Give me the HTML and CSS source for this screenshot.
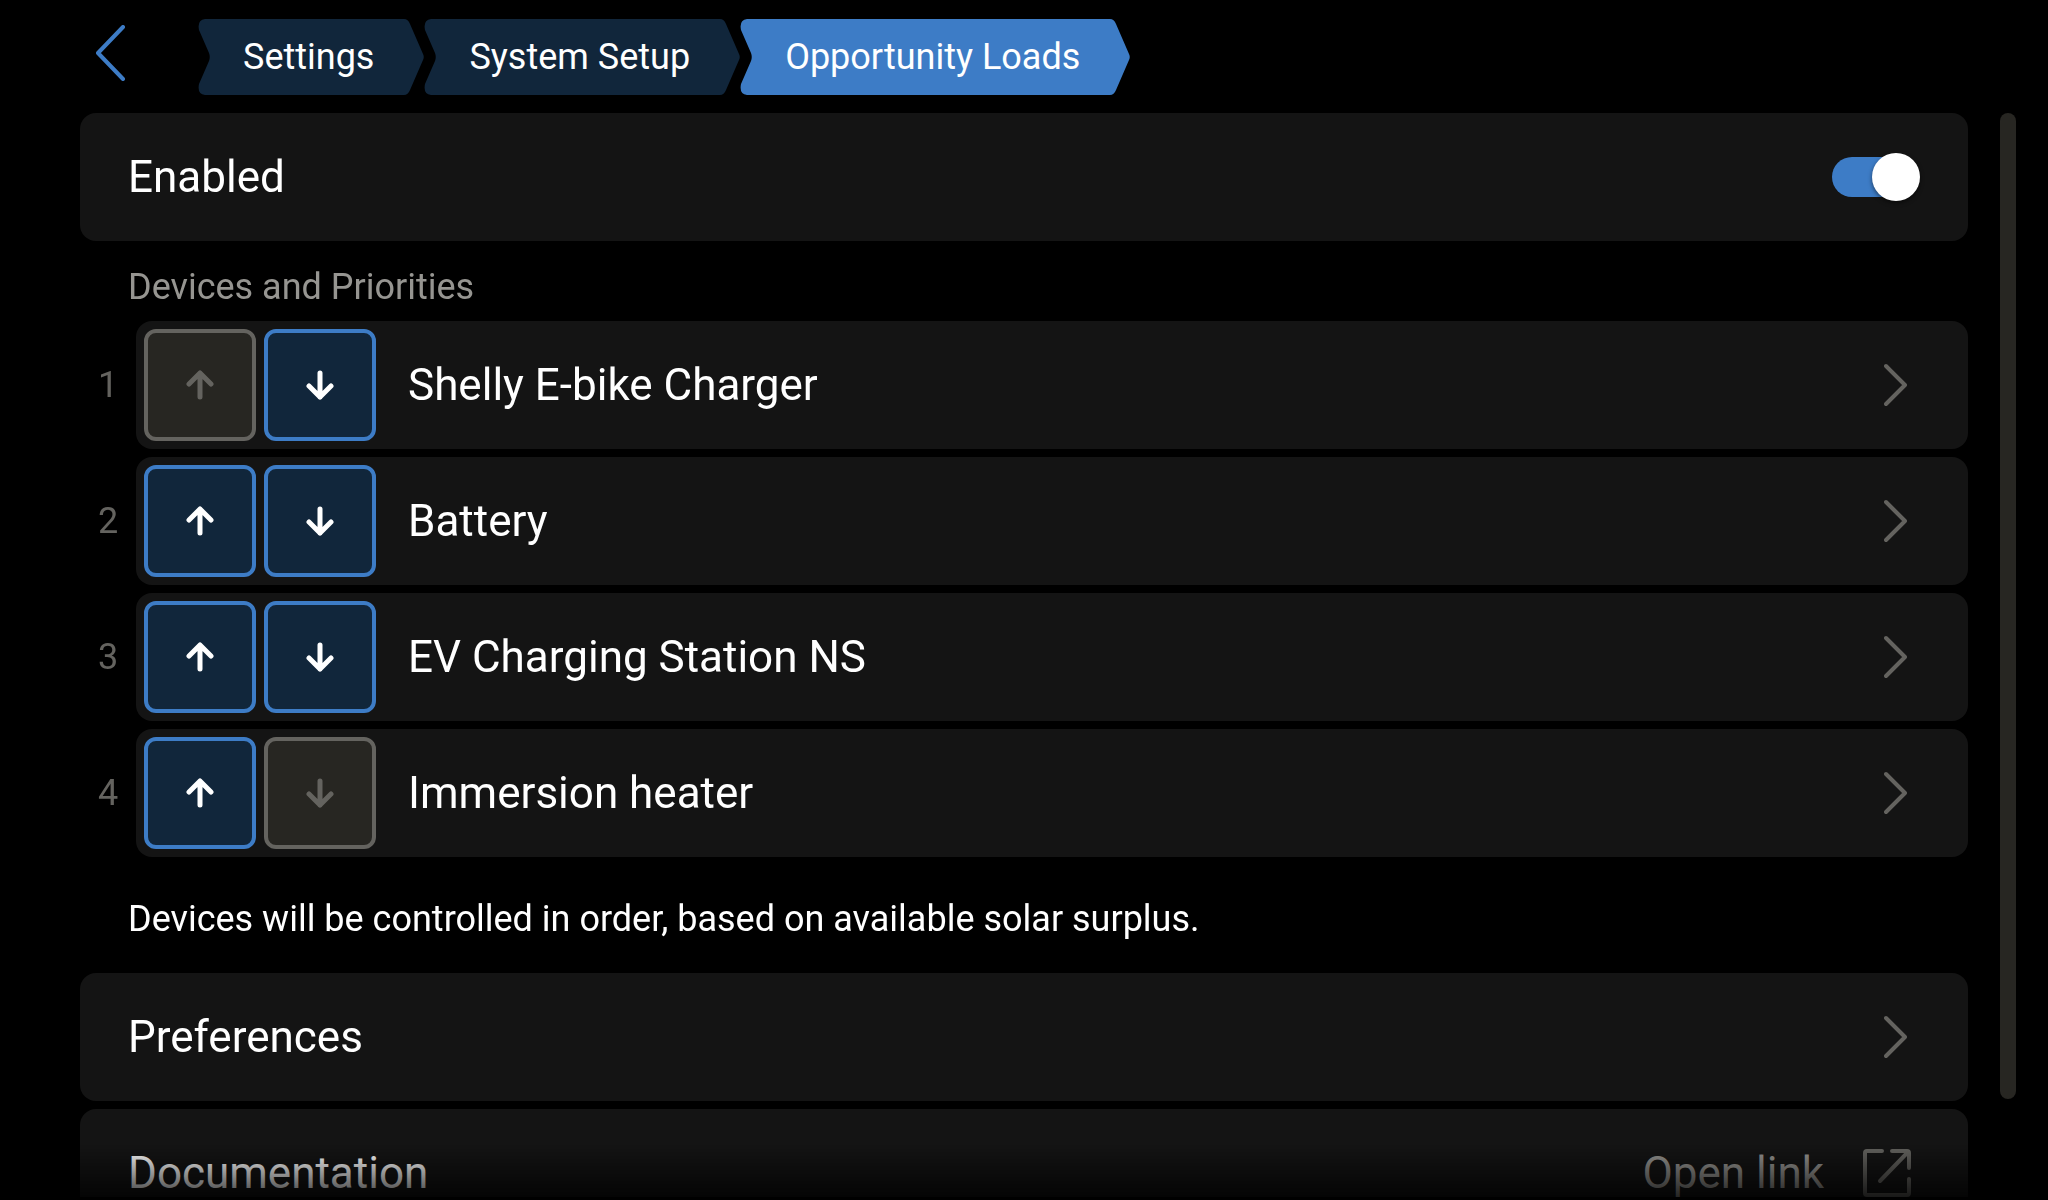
FILE: index.html
```html
<!DOCTYPE html>
<html lang="en">
<head>
<meta charset="utf-8">
<meta name="viewport" content="width=device-width, initial-scale=1">
<title>Opportunity Loads</title>
<link rel="stylesheet" href="styles.css">
</head>
<body>
<svg class="defs" aria-hidden="true">
  <symbol id="cap-left" viewBox="0 0 16 76"><path d="M16 0H7Q-1 1 1 11L11 34Q12.500 38 11 42L1 65Q-1 75 7 76H16Z"/></symbol>
  <symbol id="cap-right" viewBox="0 0 24 76"><path d="M0 0H4Q8 0 10 5L23 35Q24.500 38 23 41L10 71Q8 76 4 76H0Z"/></symbol>
  <symbol id="chevron" viewBox="0 0 24 44"><path d="M2 3L21 22L2 41"/></symbol>
  <symbol id="arrow-up" viewBox="0 0 28 30"><path d="M14 27V3M3 14L14 3L25 14"/></symbol>
  <symbol id="arrow-down" viewBox="0 0 28 30"><path d="M14 3V27M3 16L14 27L25 16"/></symbol>
</svg>

<header class="topbar">
  <button class="back" type="button" aria-label="Back">
    <svg viewBox="0 0 32 56"><path d="M29 2L4 28L29 54"/></svg>
  </button>
  <nav class="crumbs" aria-label="Breadcrumb">
    <a class="crumb" href="#settings"><svg class="cap-left"><use href="#cap-left"/></svg><span>Settings</span><svg class="cap-right"><use href="#cap-right"/></svg></a>
    <a class="crumb" href="#system"><svg class="cap-left"><use href="#cap-left"/></svg><span>System Setup</span><svg class="cap-right"><use href="#cap-right"/></svg></a>
    <a class="crumb current" href="#loads" aria-current="page"><svg class="cap-left"><use href="#cap-left"/></svg><span>Opportunity Loads</span><svg class="cap-right"><use href="#cap-right"/></svg></a>
  </nav>
</header>

<div class="view">
  <main class="content">
    <label class="card">
      <span class="title">Enabled</span>
      <input class="switch" type="checkbox" role="switch" checked>
    </label>

    <h2 class="section">Devices and Priorities</h2>
    <ol class="devices">
      <li class="device">
        <span class="rank">1</span>
        <div class="card device-card">
          <button class="move" type="button" aria-label="Move up" disabled><svg><use href="#arrow-up"/></svg></button>
          <button class="move" type="button" aria-label="Move down"><svg><use href="#arrow-down"/></svg></button>
          <a class="open" href="#shelly"><span class="title">Shelly E-bike Charger</span><svg class="chevron"><use href="#chevron"/></svg></a>
        </div>
      </li>
      <li class="device">
        <span class="rank">2</span>
        <div class="card device-card">
          <button class="move" type="button" aria-label="Move up"><svg><use href="#arrow-up"/></svg></button>
          <button class="move" type="button" aria-label="Move down"><svg><use href="#arrow-down"/></svg></button>
          <a class="open" href="#battery"><span class="title">Battery</span><svg class="chevron"><use href="#chevron"/></svg></a>
        </div>
      </li>
      <li class="device">
        <span class="rank">3</span>
        <div class="card device-card">
          <button class="move" type="button" aria-label="Move up"><svg><use href="#arrow-up"/></svg></button>
          <button class="move" type="button" aria-label="Move down"><svg><use href="#arrow-down"/></svg></button>
          <a class="open" href="#ev"><span class="title">EV Charging Station NS</span><svg class="chevron"><use href="#chevron"/></svg></a>
        </div>
      </li>
      <li class="device">
        <span class="rank">4</span>
        <div class="card device-card">
          <button class="move" type="button" aria-label="Move up"><svg><use href="#arrow-up"/></svg></button>
          <button class="move" type="button" aria-label="Move down" disabled><svg><use href="#arrow-down"/></svg></button>
          <a class="open" href="#heater"><span class="title">Immersion heater</span><svg class="chevron"><use href="#chevron"/></svg></a>
        </div>
      </li>
    </ol>
    <p class="note">Devices will be controlled in order, based on available solar surplus.</p>

    <div class="links">
      <a class="card" href="#preferences"><span class="title">Preferences</span><svg class="chevron"><use href="#chevron"/></svg></a>
      <a class="card" href="#documentation">
        <span class="title">Documentation</span>
        <span class="hint">Open link</span>
        <svg class="external" viewBox="0 0 50 50"><path d="M20 3H5Q3 3 3 5V45Q3 47 5 47H45Q47 47 47 45V31M30 3H45Q47 3 47 5V20M46 4L18 33"/></svg>
      </a>
    </div>
  </main>
  <div class="scrollbar"><div class="thumb"></div></div>
</div>
</body>
</html>
```
FILE: styles.css
```css
* {
  box-sizing: border-box;
}

body {
  margin: 0;
  height: 100vh;
  display: flex;
  flex-direction: column;
  overflow: hidden;
  background: #000;
  color: #fff;
  font-family: Roboto, "Liberation Sans", sans-serif;
  font-size: 36px;
  line-height: 44px;
}

a {
  color: inherit;
  text-decoration: none;
}

button {
  padding: 0;
  font: inherit;
  color: inherit;
  cursor: pointer;
}

svg {
  display: block;
  flex: none;
  fill: none;
  stroke: currentColor;
  stroke-width: 4px;
  stroke-linecap: round;
  stroke-linejoin: round;
}

.defs {
  position: absolute;
  width: 0;
  height: 0;
}

/* Top bar */
.topbar {
  flex: none;
  display: flex;
  align-items: flex-start;
  gap: 72px;
  padding: 19px 80px 18px 94px;
}

.back {
  display: flex;
  padding-top: 6px;
  border: 0;
  background: none;
  color: #3d7cc6;
}

.back svg {
  width: 32px;
  height: 56px;
}

.crumbs {
  display: flex;
}

.crumb {
  display: flex;
  height: 76px;
  color: #11263b;
}

.crumb.current {
  color: #3d7cc6;
}

.crumb svg {
  height: 76px;
  fill: currentColor;
  stroke: none;
}

.cap-left {
  width: 16px;
}

.cap-right {
  width: 24px;
}

.crumb span {
  padding: 16px 26px 16px 29px;
  background: #11263b;
  color: #fff;
  white-space: nowrap;
}

.crumb.current span {
  background: #3d7cc6;
}

/* Scrolling area */
.view {
  flex: 1;
  min-height: 0;
  display: flex;
  gap: 32px;
  padding: 0 32px 3px 80px;
}

.content {
  flex: 1;
  min-width: 0;
  overflow: hidden;
  -webkit-mask-image: linear-gradient(to top, rgba(0, 0, 0, 0.25), #000 54px);
  mask-image: linear-gradient(to top, rgba(0, 0, 0, 0.25), #000 54px);
}

.scrollbar {
  flex: none;
  width: 16px;
}

.thumb {
  height: 91%;
  border-radius: 8px;
  background: #272622;
}

/* Cards */
.card {
  display: flex;
  align-items: center;
  min-height: 128px;
  padding: 0 48px;
  border-radius: 16px;
  background: #141414;
}

.title {
  flex: 1;
  font-size: 44px;
  line-height: 52px;
}

.chevron {
  width: 24px;
  height: 44px;
  margin-right: 12px;
  color: #64635f;
}

.switch {
  appearance: none;
  display: flex;
  align-items: center;
  justify-content: flex-end;
  width: 88px;
  height: 48px;
  margin: 0;
  cursor: pointer;
}

.switch::before {
  content: "";
  width: 80px;
  height: 40px;
  margin-right: -40px;
  border-radius: 20px;
  background: #3d7cc6;
}

.switch::after {
  content: "";
  flex: none;
  width: 48px;
  height: 48px;
  border-radius: 50%;
  background: #fff;
  box-shadow: 0 2px 4px rgba(0, 0, 0, 0.5);
}

.section {
  margin: 0;
  padding: 24px 48px 12px;
  color: #969591;
  font-size: 36px;
  font-weight: 400;
}

/* Devices */
.devices {
  display: flex;
  flex-direction: column;
  gap: 8px;
  margin: 0;
  padding: 0;
  list-style: none;
}

.device {
  display: flex;
  align-items: center;
}

.rank {
  flex: none;
  width: 56px;
  color: #64635f;
  text-align: center;
}

.device-card {
  flex: 1;
  gap: 8px;
  padding: 0 48px 0 8px;
}

.move {
  flex: none;
  display: flex;
  align-items: center;
  justify-content: center;
  width: 112px;
  height: 112px;
  border: 4px solid #3d7cc6;
  border-radius: 12px;
  background: #11263b;
}

.move:disabled {
  border-color: #64635f;
  background: #272622;
  color: #64635f;
}

.move svg {
  width: 28px;
  height: 30px;
  stroke-width: 5px;
}

.open {
  flex: 1;
  display: flex;
  align-items: center;
  padding-left: 24px;
}

.note {
  margin: 0;
  padding: 40px 48px 32px;
}

.links {
  display: flex;
  flex-direction: column;
  gap: 8px;
}

.hint {
  color: #969591;
  font-size: 44px;
  line-height: 52px;
}

.external {
  width: 50px;
  height: 50px;
  margin: 0 8px 0 38px;
  color: #64635f;
}
```
